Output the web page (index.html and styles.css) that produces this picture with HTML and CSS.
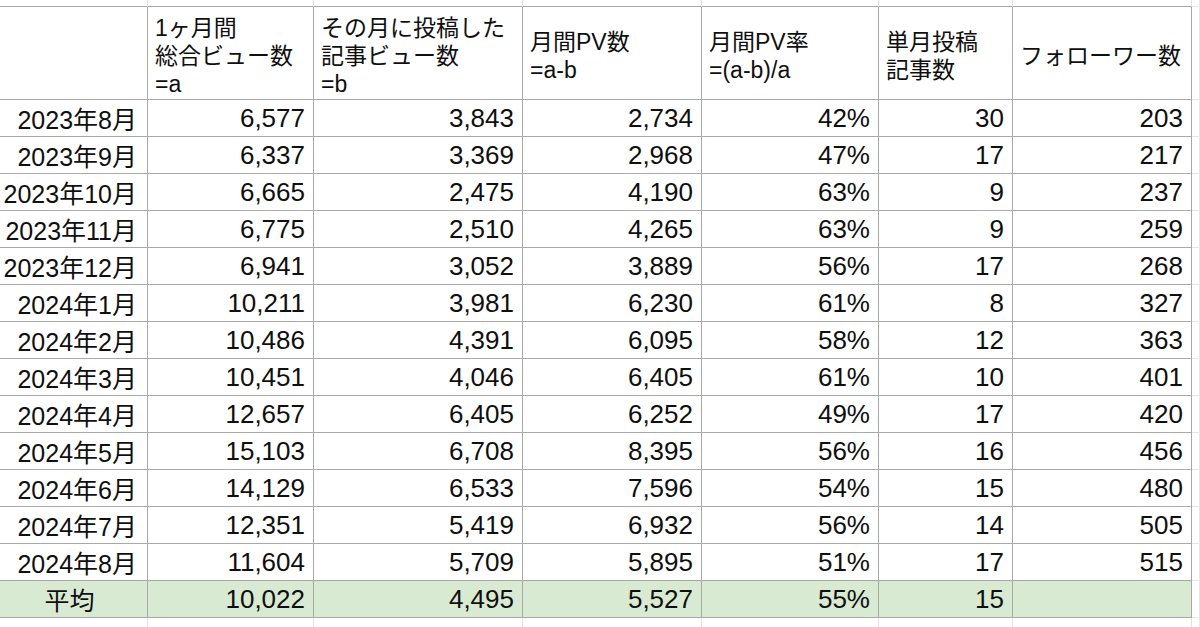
FILE: index.html
```html
<!DOCTYPE html>
<html lang="ja">
<head>
<meta charset="utf-8">
<title>月間PV集計</title>
<link rel="stylesheet" href="styles.css">
</head>
<body>
<div class="sheet">
  <!-- ghost row above -->
  <div class="c ghost-top"></div><div class="c ghost-top"></div><div class="c ghost-top"></div><div class="c ghost-top"></div><div class="c ghost-top"></div><div class="c ghost-top"></div><div class="c ghost-top"></div><div class="c ghost-top gx"></div>

  <!-- header -->
  <div class="c h"></div>
  <div class="c h">1ヶ月間<br>総合ビュー数<br>=a</div>
  <div class="c h">その月に投稿した<br>記事ビュー数<br>=b</div>
  <div class="c h">月間PV数<br>=a-b</div>
  <div class="c h">月間PV率<br>=(a-b)/a</div>
  <div class="c h">単月投稿<br>記事数</div>
  <div class="c h">フォローワー数</div>
  <div class="c gx"></div>

  <div class="c m">2023年8月</div><div class="c n">6,577</div><div class="c n">3,843</div><div class="c n">2,734</div><div class="c n">42%</div><div class="c n">30</div><div class="c n">203</div><div class="c gx"></div>
  <div class="c m">2023年9月</div><div class="c n">6,337</div><div class="c n">3,369</div><div class="c n">2,968</div><div class="c n">47%</div><div class="c n">17</div><div class="c n">217</div><div class="c gx"></div>
  <div class="c m">2023年10月</div><div class="c n">6,665</div><div class="c n">2,475</div><div class="c n">4,190</div><div class="c n">63%</div><div class="c n">9</div><div class="c n">237</div><div class="c gx"></div>
  <div class="c m">2023年11月</div><div class="c n">6,775</div><div class="c n">2,510</div><div class="c n">4,265</div><div class="c n">63%</div><div class="c n">9</div><div class="c n">259</div><div class="c gx"></div>
  <div class="c m">2023年12月</div><div class="c n">6,941</div><div class="c n">3,052</div><div class="c n">3,889</div><div class="c n">56%</div><div class="c n">17</div><div class="c n">268</div><div class="c gx"></div>
  <div class="c m">2024年1月</div><div class="c n">10,211</div><div class="c n">3,981</div><div class="c n">6,230</div><div class="c n">61%</div><div class="c n">8</div><div class="c n">327</div><div class="c gx"></div>
  <div class="c m">2024年2月</div><div class="c n">10,486</div><div class="c n">4,391</div><div class="c n">6,095</div><div class="c n">58%</div><div class="c n">12</div><div class="c n">363</div><div class="c gx"></div>
  <div class="c m">2024年3月</div><div class="c n">10,451</div><div class="c n">4,046</div><div class="c n">6,405</div><div class="c n">61%</div><div class="c n">10</div><div class="c n">401</div><div class="c gx"></div>
  <div class="c m">2024年4月</div><div class="c n">12,657</div><div class="c n">6,405</div><div class="c n">6,252</div><div class="c n">49%</div><div class="c n">17</div><div class="c n">420</div><div class="c gx"></div>
  <div class="c m">2024年5月</div><div class="c n">15,103</div><div class="c n">6,708</div><div class="c n">8,395</div><div class="c n">56%</div><div class="c n">16</div><div class="c n">456</div><div class="c gx"></div>
  <div class="c m">2024年6月</div><div class="c n">14,129</div><div class="c n">6,533</div><div class="c n">7,596</div><div class="c n">54%</div><div class="c n">15</div><div class="c n">480</div><div class="c gx"></div>
  <div class="c m">2024年7月</div><div class="c n">12,351</div><div class="c n">5,419</div><div class="c n">6,932</div><div class="c n">56%</div><div class="c n">14</div><div class="c n">505</div><div class="c gx"></div>
  <div class="c m">2024年8月</div><div class="c n">11,604</div><div class="c n">5,709</div><div class="c n">5,895</div><div class="c n">51%</div><div class="c n">17</div><div class="c n">515</div><div class="c gx"></div>

  <div class="c avg avg-label">平均</div><div class="c n avg">10,022</div><div class="c n avg">4,495</div><div class="c n avg">5,527</div><div class="c n avg">55%</div><div class="c n avg">15</div><div class="c n avg"></div><div class="c gx"></div>

  <!-- ghost row below -->
  <div class="c ghost-bot"></div><div class="c ghost-bot"></div><div class="c ghost-bot"></div><div class="c ghost-bot"></div><div class="c ghost-bot"></div><div class="c ghost-bot"></div><div class="c ghost-bot"></div><div class="c ghost-bot gx"></div>
</div>
</body>
</html>
```

FILE: styles.css
```css
html, body {
  margin: 0;
  padding: 0;
  background: #ffffff;
}

body {
  width: 1200px;
  height: 627px;
  overflow: hidden;
  font-family: "Liberation Sans", "Noto Sans CJK JP", sans-serif;
  color: #0f0f0f;
}

.sheet {
  display: grid;
  grid-template-columns: 148px 166px 209px 179px 177px 134px 179px 8px;
  grid-template-rows: 7px 93px repeat(14, 37px) 9px;
}

.c {
  box-sizing: border-box;
  border-right: 1px solid #a8a8a8;
  border-bottom: 1px solid #a8a8a8;
  display: flex;
  align-items: center;
  white-space: nowrap;
  overflow: visible;
}

.ghost-top {
  border-right-color: #e3e3e3;
}

.ghost-bot {
  border-right-color: #e3e3e3;
  border-bottom: none;
}

.gx {
  border-right: 1px solid #e6e6e6;
  border-bottom-color: #e6e6e6;
}

.ghost-top.gx {
  border-bottom-color: #e6e6e6;
}

.h {
  font-size: 23px;
  line-height: 28px;
  padding: 6px 6px 0 7px;
  justify-content: flex-start;
}

.m {
  font-size: 25px;
  justify-content: flex-end;
  padding-right: 10px;
}

.n {
  font-size: 26px;
  justify-content: flex-end;
  padding-right: 8px;
}

.avg {
  background: #d9ead3;
}

.avg-label {
  font-size: 25px;
  justify-content: center;
  padding-right: 8px;
}
```
